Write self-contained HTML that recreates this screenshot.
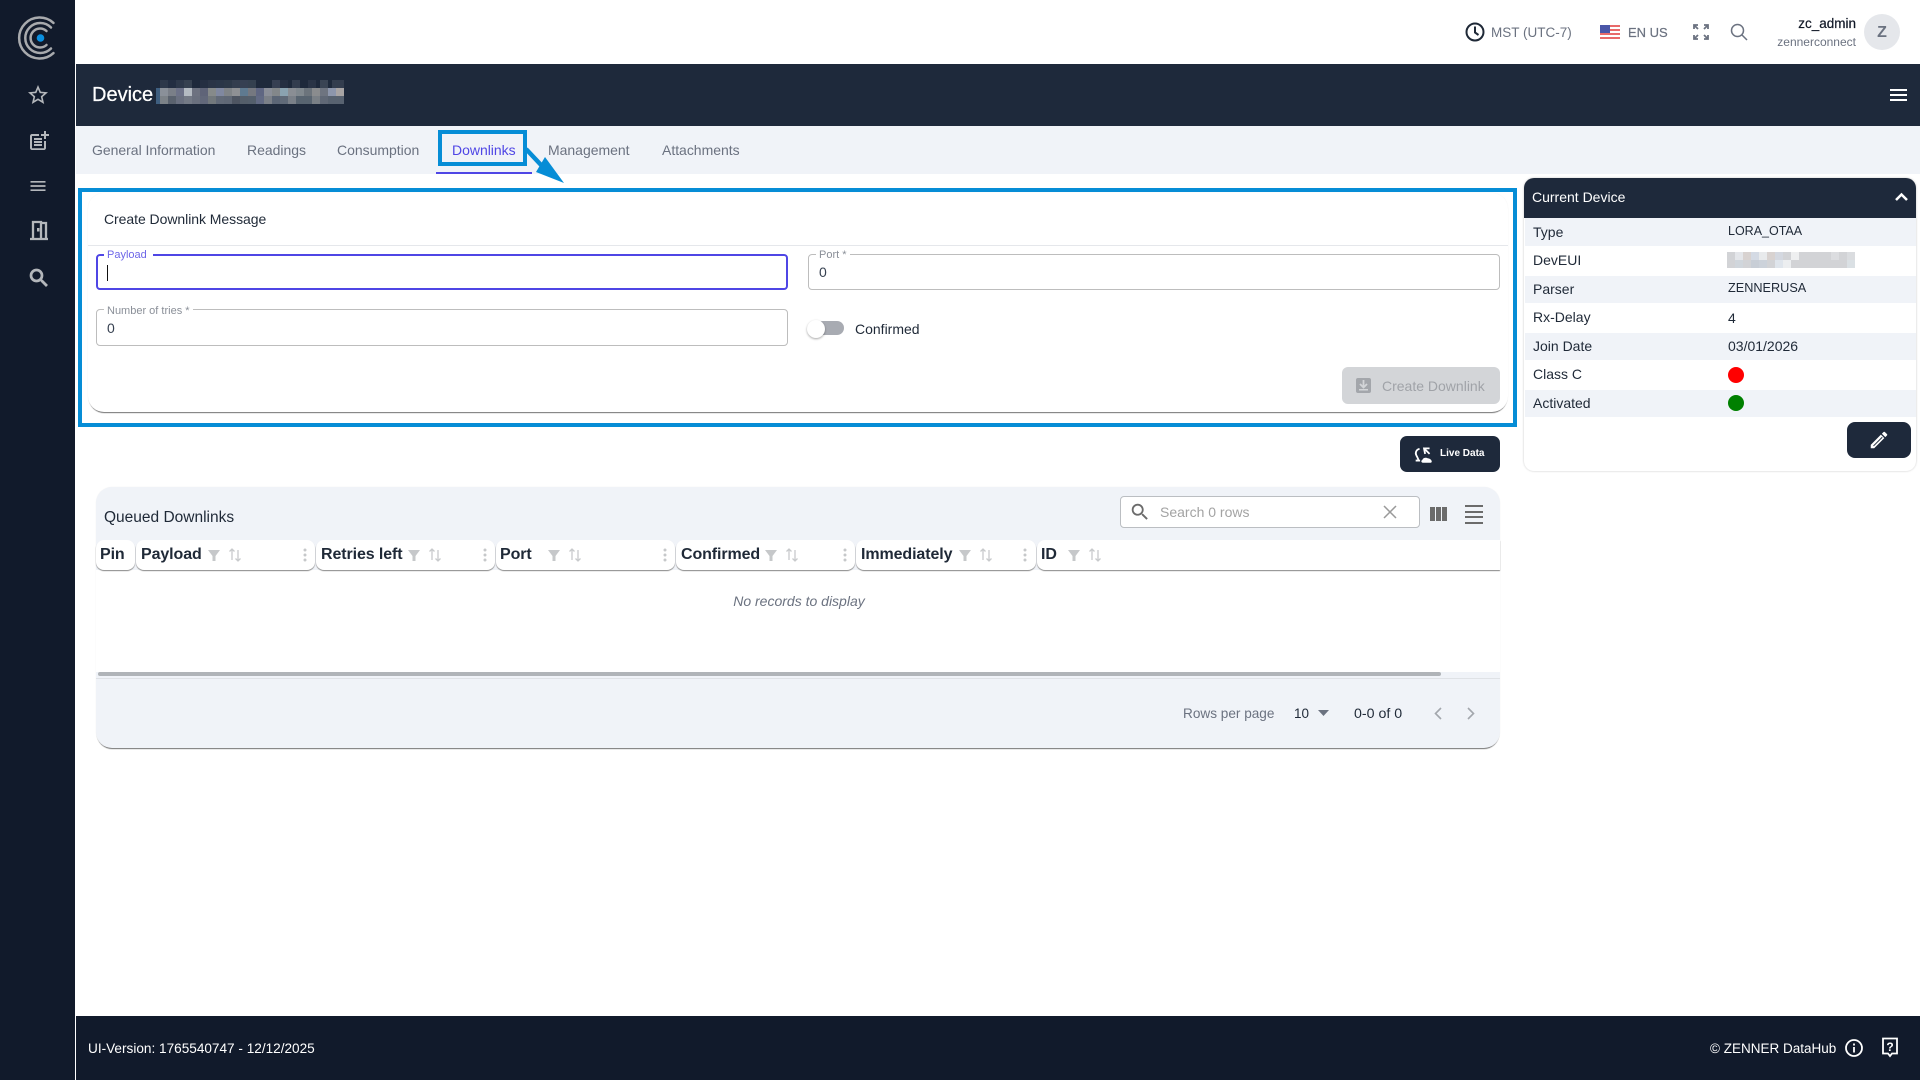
<!DOCTYPE html>
<html><head><meta charset="utf-8"><title>Device</title>
<style>
*{box-sizing:border-box}
html,body{margin:0;padding:0;width:1920px;height:1080px;overflow:hidden;background:#fff;font-family:"Liberation Sans",sans-serif;color:#1f2937}
.a{position:absolute}
.t{position:absolute;white-space:nowrap;line-height:1}
svg{position:absolute;display:block}
.tab{font-size:14px;color:#6b7280;top:143px;letter-spacing:-.02px}
.lbl{left:1533px;font-size:14px;color:#1f2937}
.val{left:1728px;font-size:14px;color:#1f2937}
.th{position:absolute;top:540px;height:30px;background:#fff;border-radius:8px;box-shadow:0 1px 1px #888}
.thx{position:absolute;top:546px;font-size:16px;font-weight:bold;color:#1f2937;white-space:nowrap;line-height:18px;letter-spacing:-.1px}
.fld{position:absolute;border:1px solid #bdbdbd;border-radius:4px;background:#fff}
.leg{position:absolute;background:#fff;font-size:11px;color:#8a8f98;padding:0 3px;line-height:11px;white-space:nowrap}
</style></head><body>
<div class="a" style="left:0;top:0;width:75px;height:1080px;background:#111a2b"></div>
<svg style="left:10px;top:10px" width="60" height="60" viewBox="10 10 60 60" fill="none" stroke="#a8aaad" stroke-width="2.500" stroke-linecap="round">
<path d="M53.500 22.900A20.500 20.500 0 1 0 53.500 53.100"/><path d="M51 27.500A15 15 0 1 0 51 48.500"/><path d="M46.500 31A9.500 9.500 0 1 0 46.500 45"/>
<circle cx="40.500" cy="38" r="3.800" fill="#0a8fe0" stroke="none"/></svg>
<svg style="left:26px;top:83px" width="24" height="24" viewBox="0 0 24 24" fill="#b4b7bb"><path d="M22 9.240l-7.190-.62L12 2 9.190 8.630 2 9.240l5.460 4.730L5.820 21 12 17.270 18.180 21l-1.630-7.030L22 9.240zM12 15.400l-3.760 2.270 1-4.280-3.320-2.880 4.380-.38L12 6.100l1.710 4.040 4.380.38-3.320 2.880 1 4.280L12 15.400z"/></svg>
<svg style="left:27px;top:129px" width="24" height="24" viewBox="0 0 24 24" fill="#b4b7bb"><path d="M17 19.220H5V7h7V5H5c-1.100 0-2 .9-2 2v12c0 1.100.9 2 2 2h12c1.100 0 2-.9 2-2v-7h-2v7.220z"/><path d="M19 2h-2v3h-3c.01.01 0 2 0 2h3v2.990c.01.01 2 0 2 0V7h3V5h-3V2z"/><path d="M7 9h8v2H7zM7 12v2h8v-2h-3zM7 15h8v2H7z"/></svg>
<svg style="left:28px;top:176px" width="20" height="20" viewBox="0 0 24 24" fill="#b4b7bb"><path d="M3 18h18v-2H3v2zm0-5h18v-2H3v2zm0-7v2h18V6H3z"/></svg>
<svg style="left:27px;top:218px" width="24" height="24" viewBox="0 0 24 24" fill="none" stroke="#b4b7bb" stroke-width="2.300"><path d="M3 21h18M6 21V4h8v17M14 5h5v16"/><rect x="10" y="10" width="2.500" height="3.500" fill="#b4b7bb" stroke="none"/></svg>
<svg style="left:27px;top:266px" width="24" height="24" viewBox="0 0 24 24" fill="#b4b7bb" stroke="#b4b7bb" stroke-width=".7"><path d="M15.500 14h-.79l-.28-.27C15.410 12.590 16 11.110 16 9.500 16 5.910 13.090 3 9.500 3S3 5.910 3 9.500 5.910 16 9.500 16c1.610 0 3.090-.59 4.230-1.570l.27.28v.79l5 4.990L20.490 19l-4.990-5zm-6 0C7.010 14 5 11.990 5 9.500S7.010 5 9.500 5 14 7.010 14 9.500 11.990 14 9.500 14z"/></svg>

<!-- top bar -->
<svg style="left:1464px;top:21px" width="22" height="22" viewBox="0 0 22 22" fill="none" stroke="#1f2937" stroke-width="2"><circle cx="11" cy="11" r="8.500"/><path d="M11 5.500V11.500l3.500 2.500"/></svg>
<div class="t" style="left:1491px;top:26px;font-size:13.500px;color:#6b7280">MST (UTC-7)</div>
<svg style="left:1600px;top:25px" width="20" height="14" viewBox="0 0 20 14" shape-rendering="crispEdges"><rect width="20" height="14" fill="#fff"/><path d="M0 0h20v2H0zM0 4h20v2H0zM0 8h20v2H0zM0 12h20v2H0z" fill="#e86a6a"/><rect width="10" height="8" fill="#4a56a8"/></svg>
<div class="t" style="left:1628px;top:26px;font-size:13px;color:#6b7280;-webkit-text-stroke:.2px #6b7280">EN US</div>
<svg style="left:1693px;top:24px" width="16" height="16" viewBox="0 0 16 16" fill="none" stroke="#6b7280" stroke-width="1.800"><path d="M1 5V1h4M1 1l4 4M15 5V1h-4M15 1l-4 4M1 11v4h4M1 15l4-4M15 11v4h-4M15 15l-4-4"/></svg>
<svg style="left:1730px;top:23px" width="18" height="18" viewBox="0 0 18 18" fill="none" stroke="#6b7280" stroke-width="1.500"><circle cx="7.500" cy="7.500" r="6"/><path d="M12 12l5 5"/></svg>
<div class="t" style="right:64px;top:17px;font-size:13.500px;color:#111827;-webkit-text-stroke:.2px #111827">zc_admin</div>
<div class="t" style="right:64px;top:36px;font-size:12px;color:#6b7280">zennerconnect</div>
<div class="a" style="left:1864px;top:14px;width:36px;height:36px;border-radius:50%;background:#e5e7eb;color:#6b7280;font-size:16px;font-weight:bold;text-align:center;line-height:37px">Z</div>

<!-- device bar -->
<div class="a" style="left:76px;top:64px;width:1844px;height:62px;background:#1e293b"></div>
<div class="t" style="left:92px;top:85px;font-size:20px;color:#fff;-webkit-text-stroke:.25px #fff">Device</div>
<svg style="left:156px;top:80px" width="190" height="24" viewBox="0 0 190 24" shape-rendering="crispEdges">
<g><rect x="0" y="0" width="190" height="8" fill="#1e293b"/><rect x="4" y="0" width="8" height="8" fill="#2d384a"/><rect x="12" y="0" width="8" height="8" fill="#232e42"/><rect x="20" y="0" width="8" height="8" fill="#2d384a"/><rect x="28" y="0" width="8" height="8" fill="#364150"/><rect x="44" y="0" width="8" height="8" fill="#252f42"/><rect x="52" y="0" width="8" height="8" fill="#2a3446"/><rect x="60" y="0" width="8" height="8" fill="#2a3648"/><rect x="68" y="0" width="8" height="8" fill="#2c3848"/><rect x="76" y="0" width="8" height="8" fill="#333d4e"/><rect x="84" y="0" width="8" height="8" fill="#364052"/><rect x="92" y="0" width="8" height="8" fill="#34404f"/><rect x="116" y="0" width="8" height="8" fill="#363f52"/><rect x="124" y="0" width="8" height="8" fill="#252f42"/><rect x="136" y="0" width="8" height="8" fill="#333d4e"/><rect x="152" y="0" width="8" height="8" fill="#2a3446"/><rect x="164" y="0" width="8" height="8" fill="#3a4454"/><rect x="176" y="0" width="12" height="8" fill="#333d4e"/></g>
<g>
<rect x="0" y="8" width="4" height="16" fill="#3f5f80"/>
<rect x="4" y="8" width="8" height="8" fill="#8a9099"/><rect x="12" y="8" width="8" height="8" fill="#7a7f88"/><rect x="20" y="8" width="8" height="8" fill="#6d7288"/><rect x="28" y="8" width="8" height="8" fill="#b4bbc2"/><rect x="36" y="8" width="8" height="8" fill="#6d7280"/><rect x="44" y="8" width="8" height="8" fill="#5f6478"/><rect x="52" y="8" width="8" height="8" fill="#868a8a"/><rect x="60" y="8" width="8" height="8" fill="#8088a0"/><rect x="68" y="8" width="8" height="8" fill="#808488"/><rect x="76" y="8" width="8" height="8" fill="#8e9094"/><rect x="84" y="8" width="8" height="8" fill="#5f7a90"/><rect x="92" y="8" width="8" height="8" fill="#757880"/><rect x="100" y="8" width="8" height="8" fill="#5f6682"/><rect x="108" y="8" width="8" height="8" fill="#8a8e98"/><rect x="116" y="8" width="8" height="8" fill="#83878a"/><rect x="124" y="8" width="8" height="8" fill="#8aa2b0"/><rect x="132" y="8" width="8" height="8" fill="#8a8e94"/><rect x="140" y="8" width="8" height="8" fill="#80888e"/><rect x="148" y="8" width="8" height="8" fill="#6c747c"/><rect x="156" y="8" width="8" height="8" fill="#8a8c8e"/><rect x="164" y="8" width="8" height="8" fill="#6e7480"/><rect x="172" y="8" width="8" height="8" fill="#8d96ac"/><rect x="180" y="8" width="8" height="8" fill="#a8a4a4"/>
<rect x="4" y="16" width="8" height="8" fill="#7c8288"/><rect x="12" y="16" width="8" height="8" fill="#5a626e"/><rect x="20" y="16" width="8" height="8" fill="#6a7080"/><rect x="28" y="16" width="8" height="8" fill="#747a86"/><rect x="36" y="16" width="8" height="8" fill="#6a707e"/><rect x="44" y="16" width="8" height="8" fill="#62687a"/><rect x="52" y="16" width="8" height="8" fill="#72787c"/><rect x="60" y="16" width="8" height="8" fill="#626a78"/><rect x="68" y="16" width="8" height="8" fill="#606876"/><rect x="76" y="16" width="8" height="8" fill="#4e5562"/><rect x="84" y="16" width="8" height="8" fill="#545e6a"/><rect x="92" y="16" width="8" height="8" fill="#545f6c"/><rect x="100" y="16" width="8" height="8" fill="#626a84"/><rect x="108" y="16" width="8" height="8" fill="#7b8088"/><rect x="116" y="16" width="8" height="8" fill="#5c6676"/><rect x="124" y="16" width="8" height="8" fill="#606a78"/><rect x="132" y="16" width="8" height="8" fill="#7a8088"/><rect x="140" y="16" width="8" height="8" fill="#586470"/><rect x="148" y="16" width="8" height="8" fill="#586470"/><rect x="156" y="16" width="8" height="8" fill="#7a8086"/><rect x="164" y="16" width="8" height="8" fill="#606876"/><rect x="172" y="16" width="16" height="8" fill="#586270"/>
</g></svg>
<svg style="left:1888px;top:84px" width="21" height="21" viewBox="0 0 21 21" fill="#fff"><path d="M2 5h17v2H2zM2 10h17v2H2zM2 15h17v2H2z"/></svg>

<!-- tabs -->
<div class="a" style="left:76px;top:126px;width:1844px;height:48px;background:#f0f3f8"></div>
<div class="t tab" style="left:92px">General Information</div>
<div class="t tab" style="left:247px">Readings</div>
<div class="t tab" style="left:337px">Consumption</div>
<div class="t tab" style="left:452px;color:#4f46e5">Downlinks</div>
<div class="t tab" style="left:548px">Management</div>
<div class="t tab" style="left:662px">Attachments</div>
<div class="a" style="left:436px;top:172px;width:96px;height:2px;background:#4f46e5"></div>

<!-- create card -->
<div class="a" style="left:88px;top:193px;width:1420px;height:219px;background:#fff;border-radius:16px;box-shadow:0 2px 1px -1px rgba(0,0,0,.55),0 0 1px rgba(0,0,0,.08)"></div>
<div class="a" style="left:88px;top:245px;width:1420px;height:1px;background:#e5e7eb"></div>
<div class="t" style="left:104px;top:212px;font-size:14px;color:#1f2937;letter-spacing:-.05px">Create Downlink Message</div>

<div class="fld" style="left:96px;top:254px;width:692px;height:36px;border:2px solid #4f46e5"></div>
<div class="leg" style="left:104px;top:250px;color:#6d66e8">Payload&nbsp;</div>
<div class="a" style="left:107px;top:265px;width:1px;height:16px;background:#111"></div>
<div class="fld" style="left:808px;top:254px;width:692px;height:36px"></div>
<div class="leg" style="left:816px;top:250px">Port *</div>
<div class="t" style="left:819px;top:265px;font-size:14px;color:#374151">0</div>
<div class="fld" style="left:96px;top:309px;width:692px;height:37px"></div>
<div class="leg" style="left:104px;top:306px">Number of tries *</div>
<div class="t" style="left:107px;top:321px;font-size:14px;color:#374151">0</div>
<div class="a" style="left:816px;top:321px;width:28px;height:14px;border-radius:7px;background:#a8abb2"></div>
<div class="a" style="left:807px;top:320px;width:18px;height:18px;border-radius:50%;background:#fff;box-shadow:0 1px 2px rgba(0,0,0,.35)"></div>
<div class="t" style="left:855px;top:322px;font-size:14px;color:#1f2937">Confirmed</div>
<div class="a" style="left:1342px;top:367px;width:158px;height:37px;background:#d3d5d8;border-radius:6px"></div>
<svg style="left:1355px;top:377px" width="17" height="17" viewBox="0 0 17 17"><rect x="1" y="1" width="15" height="15" rx="2" fill="#a3a6ab"/><path d="M5 7l3.500 3.500L12 7" stroke="#d3d5d8" stroke-width="1.800" fill="none"/><path d="M8.500 3v7" stroke="#d3d5d8" stroke-width="1.800"/><rect x="4" y="12" width="9" height="1.500" fill="#d3d5d8"/></svg>
<div class="t" style="left:1382px;top:379px;font-size:14px;color:#a0a3a8">Create Downlink</div>

<!-- annotations -->
<div class="a" style="left:78px;top:188px;width:1439px;height:239px;border:4px solid #068dd6"></div>
<div class="a" style="left:438px;top:130px;width:89px;height:36px;border:4px solid #068dd6"></div>
<svg style="left:520px;top:145px" width="50" height="42" viewBox="520 145 50 42"><path d="M526 149L542 166" stroke="#068dd6" stroke-width="4.500"/><path d="M564 183L536 172 545 157z" fill="#068dd6"/></svg>

<!-- live data -->
<div class="a" style="left:1400px;top:436px;width:100px;height:36px;background:#1e293b;border-radius:7px"></div>
<svg style="left:1414px;top:446px" width="20" height="18" viewBox="0 0 18 16" fill="none" stroke="#fff" stroke-width="1.600"><path d="M5 2.500C2 3 1 6 2 8c.5 1.500 2 3 2 5M1.500 13H5.500M10 7L9 2h5M9.500 2.500L14 7"/><path d="M8 15c-1.500 0-2-2 -.5-2.500C8 10.500 11 10 12.500 11c3 0 5 4 2 4z" fill="#fff" stroke="none"/></svg>
<div class="t" style="left:1440px;top:449px;font-size:10px;font-weight:bold;color:#fff">Live Data</div>

<!-- table -->
<div class="a" style="left:96px;top:487px;width:1404px;height:261px;background:#f0f3f8;border-radius:16px;box-shadow:0 2px 1px -1px rgba(0,0,0,.55),0 0 1px rgba(0,0,0,.08)"></div>
<div class="a" style="left:96px;top:570px;width:1404px;height:102px;background:#fff"></div>
<div class="t" style="left:104px;top:509px;font-size:15.500px;color:#1f2937;margin-top:1px">Queued Downlinks</div>
<div class="a" style="left:1120px;top:496px;width:300px;height:32px;background:#fff;border:1px solid #bbbec2;border-radius:4px"></div>
<svg style="left:1129px;top:501px" width="22" height="22" viewBox="0 0 24 24" fill="#6b6b6b"><path d="M15.500 14h-.79l-.28-.27C15.410 12.590 16 11.110 16 9.500 16 5.910 13.090 3 9.500 3S3 5.910 3 9.500 5.910 16 9.500 16c1.610 0 3.090-.59 4.230-1.570l.27.28v.79l5 4.990L20.490 19l-4.990-5zm-6 0C7.010 14 5 11.990 5 9.500S7.010 5 9.500 5 14 7.010 14 9.500 11.990 14 9.500 14z"/></svg>
<div class="t" style="left:1160px;top:505px;font-size:14px;color:#a3a3a3">Search 0 rows</div>
<svg style="left:1383px;top:505px" width="14" height="14" viewBox="0 0 14 14" stroke="#9a9a9a" stroke-width="1.500"><path d="M1 1l12 12M13 1L1 13"/></svg>
<svg style="left:1430px;top:507px" width="17" height="14" viewBox="0 0 17 14" fill="#6b6b6b" shape-rendering="crispEdges"><rect width="5" height="14"/><rect x="6" width="5" height="14"/><rect x="12" width="5" height="14"/></svg>
<svg style="left:1465px;top:505px" width="18" height="19" viewBox="0 0 18 19" fill="#6b6b6b" shape-rendering="crispEdges"><rect width="18" height="2"/><rect y="6" width="18" height="2"/><rect y="11" width="18" height="2"/><rect y="17" width="18" height="2"/></svg>

<div class="th" style="left:96px;width:39px"></div>
<div class="th" style="left:136px;width:179px"></div>
<div class="th" style="left:316px;width:179px"></div>
<div class="th" style="left:496px;width:179px"></div>
<div class="th" style="left:676px;width:179px"></div>
<div class="th" style="left:856px;width:180px"></div>
<div class="th" style="left:1037px;width:463px;border-radius:8px 0 0 8px"></div>
<div class="thx" style="left:100px">Pin</div>
<div class="thx" style="left:141px">Payload</div>
<div class="thx" style="left:321px">Retries left</div>
<div class="thx" style="left:500px">Port</div>
<div class="thx" style="left:681px">Confirmed</div>
<div class="thx" style="left:861px">Immediately</div>
<div class="thx" style="left:1041px">ID</div>

<svg style="left:0;top:540px" width="1500" height="30" viewBox="0 540 1500 30">
<defs>
<g id="fi"><path d="M-6-5H6L1.500 1V6H-1.500V1z" fill="#c6c8ca"/></g>
<g id="so"><path d="M-3-6V5M-5.500-3.500L-3-6-.5-3.500M3-5V6M.5 3.500L3 6 5.500 3.500" stroke="#c8cacc" stroke-width="1.300" fill="none"/></g>
<g id="dt"><circle cy="-5" r="1.500" fill="#c6c8ca"/><circle r="1.500" fill="#c6c8ca"/><circle cy="5" r="1.500" fill="#c6c8ca"/></g>
</defs>
<use href="#fi" x="214" y="555"/><use href="#so" x="235" y="555"/><use href="#dt" x="305" y="555"/>
<use href="#fi" x="414" y="555"/><use href="#so" x="435" y="555"/><use href="#dt" x="485" y="555"/>
<use href="#fi" x="554" y="555"/><use href="#so" x="575" y="555"/><use href="#dt" x="665" y="555"/>
<use href="#fi" x="771" y="555"/><use href="#so" x="792" y="555"/><use href="#dt" x="845" y="555"/>
<use href="#fi" x="965" y="555"/><use href="#so" x="986" y="555"/><use href="#dt" x="1025" y="555"/>
<use href="#fi" x="1074" y="555"/><use href="#so" x="1095" y="555"/>
</svg>
<div class="t" style="left:699px;width:200px;text-align:center;top:594px;font-size:14px;font-style:italic;color:#6b7280">No records to display</div>

<div class="a" style="left:98px;top:672px;width:1343px;height:4px;background:#b0b4b8;border-radius:2px"></div>
<div class="a" style="left:96px;top:678px;width:1404px;height:1px;background:#dfe2e6"></div>
<div class="t" style="left:1183px;top:707px;font-size:13.600px;color:#6b7280">Rows per page</div>
<div class="t" style="left:1294px;top:707px;font-size:13.500px;color:#1f2937">10</div>
<svg style="left:1318px;top:710px" width="11" height="6" viewBox="0 0 11 6"><path d="M0 0h11L5.500 6z" fill="#6b7280"/></svg>
<div class="t" style="left:1354px;top:707px;font-size:14.200px;color:#1f2937">0-0 of 0</div>
<svg style="left:1433px;top:707px" width="44" height="13" viewBox="0 0 44 13" fill="none" stroke="#a3a7ad" stroke-width="1.600"><path d="M8 1L2.500 6.500 8 12M35 1l5.500 5.500L35 12"/></svg>

<!-- current device -->
<div class="a" style="left:1524px;top:178px;width:392px;height:293px;background:#fff;border-radius:10px;box-shadow:0 0 2px rgba(0,0,0,.22)"></div>
<div class="a" style="left:1524px;top:178px;width:392px;height:40px;background:#1e293b;border-radius:10px 10px 0 0"></div>
<div class="t" style="left:1532px;top:190px;font-size:14px;color:#fff">Current Device</div>
<svg style="left:1895px;top:192px" width="13" height="9" viewBox="0 0 13 9" fill="none" stroke="#fff" stroke-width="2.500"><path d="M1 8l5.500-5.500L12 8"/></svg>
<div class="a" style="left:1525px;top:218px;width:391px;height:28px;background:#f0f3f8"></div>
<div class="a" style="left:1525px;top:276px;width:391px;height:27px;background:#f0f3f8"></div>
<div class="a" style="left:1525px;top:333px;width:391px;height:27px;background:#f0f3f8"></div>
<div class="a" style="left:1525px;top:390px;width:391px;height:27px;background:#f0f3f8"></div>
<div class="t lbl" style="top:225px">Type</div><div class="t val" style="top:225px;font-size:12.500px">LORA_OTAA</div>
<div class="t lbl" style="top:253px">DevEUI</div>
<svg style="left:1727px;top:252px" width="128" height="16" viewBox="0 0 128 16" shape-rendering="crispEdges">
<rect width="128" height="16" fill="#d2d3d6"/>
<rect x="8" width="8" height="8" fill="#e4e6ea"/><rect x="16" width="8" height="8" fill="#d8d2d0"/><rect x="24" width="8" height="8" fill="#d4dae4"/><rect x="32" width="8" height="8" fill="#e8eaec"/><rect x="40" width="8" height="8" fill="#d8d2d0"/><rect x="48" width="8" height="8" fill="#d4d8e0"/><rect x="64" width="8" height="8" fill="#eeeff0"/><rect x="104" width="8" height="8" fill="#dcdde0"/><rect x="120" width="8" height="8" fill="#dadcdf"/>
<rect x="8" y="8" width="8" height="8" fill="#d0d6dc"/><rect x="24" y="8" width="8" height="8" fill="#c8ced6"/><rect x="32" y="8" width="8" height="8" fill="#ccd2da"/><rect x="48" y="8" width="8" height="8" fill="#dfe5ec"/><rect x="56" y="8" width="8" height="8" fill="#eceef0"/><rect x="120" y="8" width="8" height="8" fill="#dae0e4"/></svg>
<div class="t lbl" style="top:282px">Parser</div><div class="t val" style="top:282px;font-size:12.700px">ZENNERUSA</div>
<div class="t lbl" style="top:310px">Rx-Delay</div><div class="t val" style="top:311px">4</div>
<div class="t lbl" style="top:339px">Join Date</div><div class="t val" style="top:339px">03/01/2026</div>
<div class="t lbl" style="top:367px">Class C</div><div class="a" style="left:1728px;top:367px;width:16px;height:16px;border-radius:50%;background:#f00"></div>
<div class="t lbl" style="top:396px">Activated</div><div class="a" style="left:1728px;top:395px;width:16px;height:16px;border-radius:50%;background:#008000"></div>
<div class="a" style="left:1847px;top:422px;width:64px;height:36px;background:#1e293b;border-radius:8px"></div>
<svg style="left:1868px;top:429px" width="22" height="22" viewBox="0 0 24 24" fill="#fff"><path d="M3 17.250V21h3.750L17.810 9.940l-3.750-3.750L3 17.250zM20.710 7.040c.39-.39.39-1.020 0-1.410l-2.340-2.340c-.39-.39-1.020-.39-1.410 0l-1.830 1.830 3.750 3.750 1.830-1.830z"/><path d="M6 18.500L15.500 9" stroke="#1e293b" stroke-width="1"/></svg>

<!-- footer -->
<div class="a" style="left:76px;top:1016px;width:1844px;height:64px;background:#111a2b"></div>
<div class="t" style="left:88px;top:1042px;font-size:13.600px;color:#fff">UI-Version: 1765540747 - 12/12/2025</div>
<div class="t" style="left:1710px;top:1042px;font-size:13.500px;color:#fff">© ZENNER DataHub</div>
<svg style="left:1844px;top:1038px" width="20" height="20" viewBox="0 0 20 20" fill="none" stroke="#fff" stroke-width="1.800"><circle cx="10" cy="10" r="8"/><path d="M10 9v5.500M10 5.500v2"/></svg>
<svg style="left:1881px;top:1037px" width="18" height="21" viewBox="0 0 18 21" fill="none" stroke="#fff" stroke-width="1.800"><path d="M2 1.500h14v15H11l-2 2.500-2-2.500H2z"/><text x="9" y="14" font-size="12" font-weight="bold" fill="#fff" stroke="none" text-anchor="middle" font-family="Liberation Sans">?</text></svg>
</body></html>
